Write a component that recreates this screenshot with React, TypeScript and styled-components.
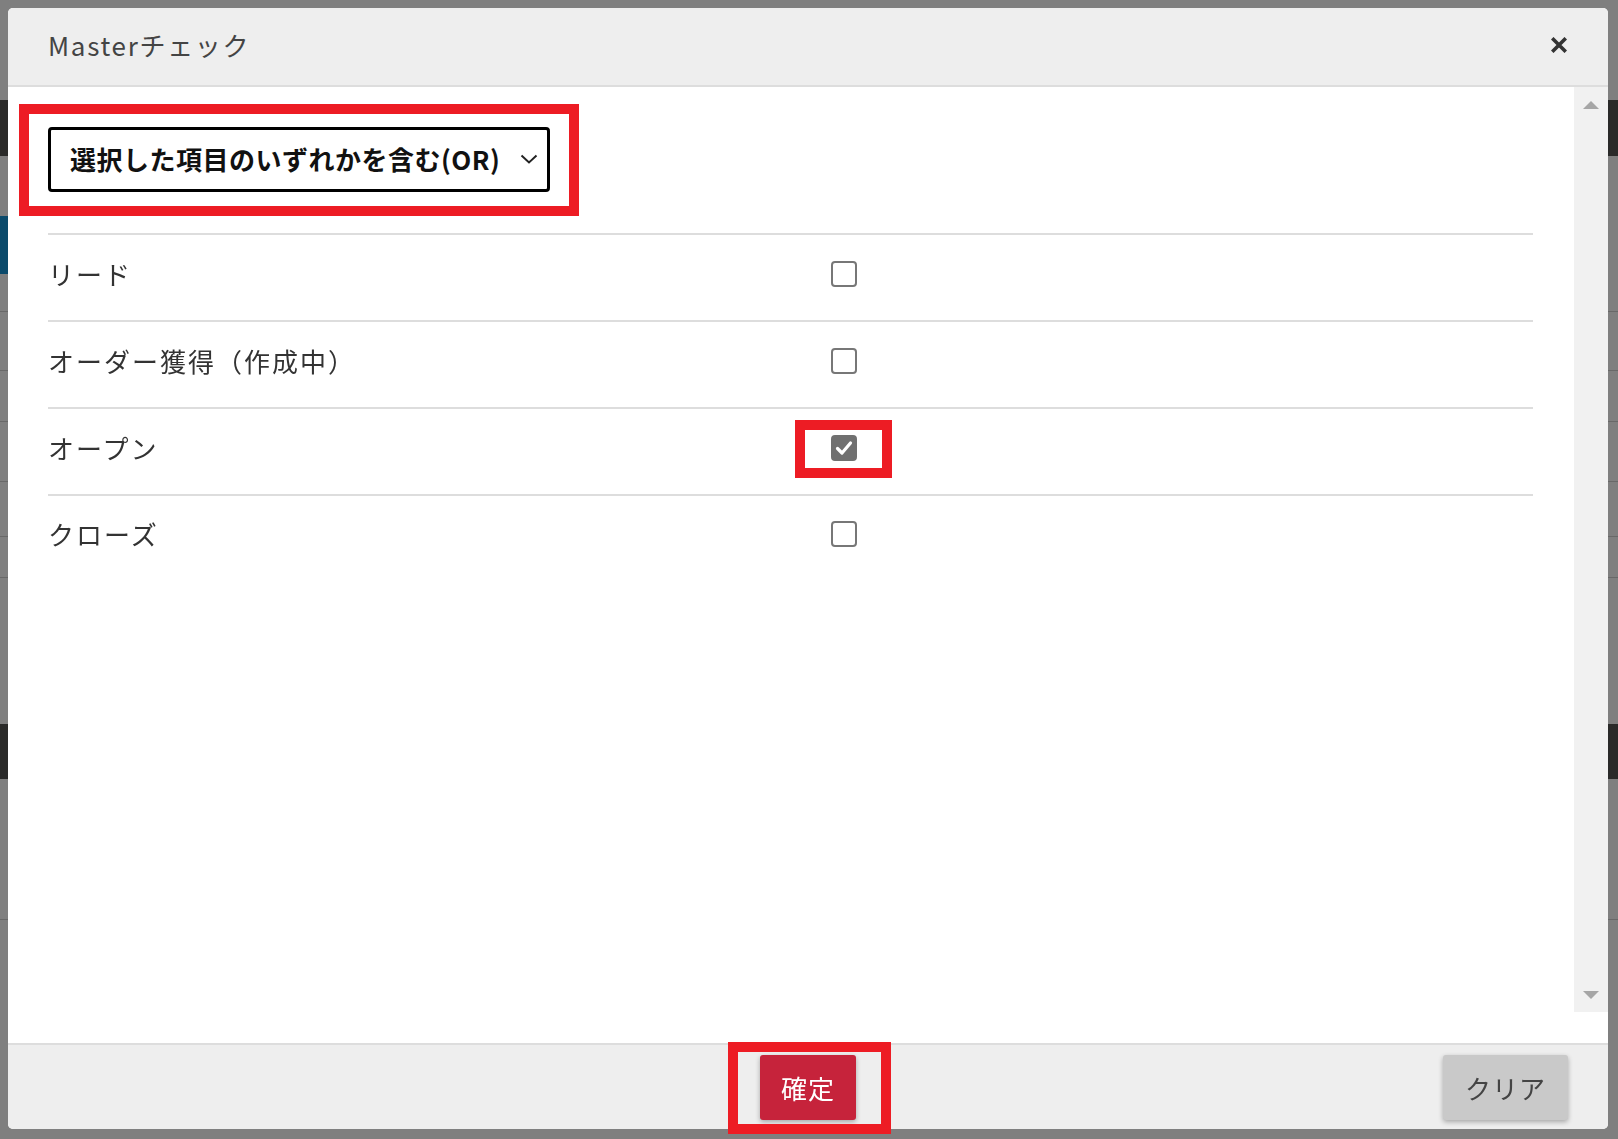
import React, { useState } from 'react'
import styled, { createGlobalStyle } from 'styled-components'

const GlobalStyle = createGlobalStyle`
  html, body {
    margin: 0;
    padding: 0;
    background: #7f7f7f;
    font-family: "Noto Sans CJK JP", "Noto Sans", sans-serif;
  }
  * { box-sizing: border-box; }
`

// ---- page behind the overlay ----
const Page = styled.div`
  height: 1139px;
  overflow: hidden;
  background: #7f7f7f;
  display: flex;
  flex-direction: column;
`

const Band = styled.div<{ $h: number; $bg?: string; $line?: boolean }>`
  flex: none;
  height: ${p => p.$h}px;
  background: ${p => p.$bg || 'transparent'};
  border-bottom: ${p => (p.$line ? '1px solid #686868' : 'none')};
`

const BlueTab = styled.div`
  flex: none;
  height: 58px;
  width: 220px;
  background: #0b4a6b;
`

// ---- modal ----
const Overlay = styled.div`
  position: fixed;
  inset: 0;
  padding: 8px 10px 10px 8px;
  display: flex;
`

const Modal = styled.div`
  flex: 1;
  display: flex;
  flex-direction: column;
  background: #fff;
  border-radius: 5px;
`

const Header = styled.div`
  height: 79px;
  flex: none;
  display: flex;
  align-items: center;
  justify-content: space-between;
  padding: 0 41px 3px 40px;
  background: #eeeeee;
  border-bottom: 2px solid #dddddd;
  border-radius: 5px 5px 0 0;
`

const Title = styled.h1`
  margin: 0;
  font-size: 26px;
  font-weight: 400;
  letter-spacing: 1.7px;
  color: #444;
  line-height: 1;
`

const CloseButton = styled.button`
  border: 0;
  padding: 0;
  background: none;
  width: 16px;
  height: 16px;
  display: flex;
  cursor: pointer;
`

const Body = styled.div`
  flex: 1;
  display: flex;
  flex-direction: column;
  padding-bottom: 31px;
`

const ScrollArea = styled.div`
  flex: 1;
  display: flex;
`

const Content = styled.div`
  flex: 1;
  padding: 40px 41px 0 40px;
`

const Scrollbar = styled.div`
  width: 34px;
  flex: none;
  background: #f1f1f1;
  display: flex;
  flex-direction: column;
  justify-content: space-between;
  align-items: center;
  padding: 14px 0 13px;
`

const Arrow = styled.div<{ $down?: boolean }>`
  width: 0;
  height: 0;
  border-left: 8px solid transparent;
  border-right: 8px solid transparent;
  ${p => (p.$down ? 'border-top: 8px solid #a6a6a6;' : 'border-bottom: 8px solid #a6a6a6;')}
`

const Anchor = styled.div`
  position: relative;
  display: inline-flex;
  justify-self: start;
`

const Highlight = styled.span<{ $t: number; $r: number; $b: number; $l: number }>`
  position: absolute;
  top: ${p => -p.$t}px;
  right: ${p => -p.$r}px;
  bottom: ${p => -p.$b}px;
  left: ${p => -p.$l}px;
  border: 10px solid #ed1c24;
  pointer-events: none;
`

const SelectBox = styled.div`
  width: 502px;
  height: 65px;
  border: 3px solid #000;
  border-radius: 4px;
  display: flex;
  align-items: center;
  justify-content: space-between;
  padding: 0 9px 2px 19px;
  font-size: 26px;
  font-weight: 700;
  letter-spacing: 0.5px;
  color: #111;
  background: #fff;
`

const Table = styled.div`
  margin-top: 41px;
`

const Row = styled.div<{ $last?: boolean }>`
  display: grid;
  grid-template-columns: 783px 1fr;
  align-items: center;
  justify-items: start;
  height: ${p => (p.$last ? 85 : 87)}px;
  border-top: 2px solid #dddddd;
  padding-bottom: 8px;
`

const Label = styled.span`
  font-size: 26px;
  letter-spacing: 2px;
  color: #333;
  line-height: 1;
`

const Box = styled.span<{ $checked?: boolean }>`
  width: 26px;
  height: 26px;
  border-radius: 4px;
  border: 2px solid ${p => (p.$checked ? '#707070' : '#777')};
  background: ${p => (p.$checked ? '#707070' : '#fff')};
  display: flex;
  align-items: center;
  justify-content: center;
  cursor: pointer;
`

const Footer = styled.div`
  height: 86px;
  flex: none;
  background: #eeeeee;
  border-top: 2px solid #dddddd;
  border-radius: 0 0 5px 5px;
  display: grid;
  grid-template-columns: 1fr auto 1fr;
  align-items: start;
  padding: 10px 40px 0;
`

const Button = styled.button<{ $primary?: boolean }>`
  height: 65px;
  padding: 0 ${p => (p.$primary ? 21 : 22)}px;
  border: 0;
  border-radius: 3px;
  font-family: inherit;
  font-size: 26px;
  letter-spacing: 1px;
  color: ${p => (p.$primary ? '#fff' : '#444')};
  background: ${p => (p.$primary ? '#c6233b' : '#c9c9c9')};
  box-shadow: 0 2px 5px rgba(0, 0, 0, 0.3);
  cursor: pointer;
`

const Right = styled.div`
  justify-self: end;
`

const statuses = [
  { name: 'リード', checked: false },
  { name: 'オーダー獲得（作成中）', checked: false },
  { name: 'オープン', checked: true },
  { name: 'クローズ', checked: false },
]

const CheckIcon = () => (
  <svg width="18" height="18" viewBox="0 0 18 18">
    <path d="M2.5 9.5 L7 14 L15.5 4" fill="none" stroke="#fff" strokeWidth="3.2" strokeLinecap="round" strokeLinejoin="round" />
  </svg>
)

const App: React.FC = () => {
  const [items, setItems] = useState(statuses)

  const toggle = (i: number) =>
    setItems(prev => prev.map((it, j) => (j === i ? { ...it, checked: !it.checked } : it)))

  return (
    <>
      <GlobalStyle />
      <Page>
        <Band $h={100} />
        <Band $h={56} $bg="#2a2a29" />
        <Band $h={60} />
        <BlueTab />
        <Band $h={38} $line />
        <Band $h={59} $line />
        <Band $h={51} $line />
        <Band $h={60} $line />
        <Band $h={55} $line />
        <Band $h={41} $line />
        <Band $h={146} />
        <Band $h={55} $bg="#2a2a29" />
        <Band $h={141} $line />
      </Page>

      <Overlay>
        <Modal>
          <Header>
            <Title>Masterチェック</Title>
            <CloseButton aria-label="close">
              <svg width="16" height="16" viewBox="0 0 16 16">
                <path d="M2.5 2.5 L13.5 13.5 M13.5 2.5 L2.5 13.5" stroke="#333" strokeWidth="3.6" strokeLinecap="square" />
              </svg>
            </CloseButton>
          </Header>

          <Body>
            <ScrollArea>
              <Content>
                <Anchor>
                  <SelectBox>
                    <span>選択した項目のいずれかを含む(OR)</span>
                    <svg width="18" height="10" viewBox="0 0 18 10">
                      <polyline points="1.5,1.5 9,8.5 16.5,1.5" fill="none" stroke="#222" strokeWidth="2" />
                    </svg>
                  </SelectBox>
                  <Highlight $t={23} $r={29} $b={24} $l={29} />
                </Anchor>

                <Table>
                  {items.map((it, i) => (
                    <Row key={it.name} $last={i === items.length - 1}>
                      <Label>{it.name}</Label>
                      <Anchor onClick={() => toggle(i)}>
                        <Box $checked={it.checked}>{it.checked && <CheckIcon />}</Box>
                        {i === 2 && <Highlight $t={15} $r={35} $b={17} $l={36} />}
                      </Anchor>
                    </Row>
                  ))}
                </Table>
              </Content>
              <Scrollbar>
                <Arrow />
                <Arrow $down />
              </Scrollbar>
            </ScrollArea>
          </Body>

          <Footer>
            <span />
            <Anchor>
              <Button $primary>確定</Button>
              <Highlight $t={13} $r={35} $b={14} $l={32} />
            </Anchor>
            <Right>
              <Button>クリア</Button>
            </Right>
          </Footer>
        </Modal>
      </Overlay>
    </>
  )
}

export default App
